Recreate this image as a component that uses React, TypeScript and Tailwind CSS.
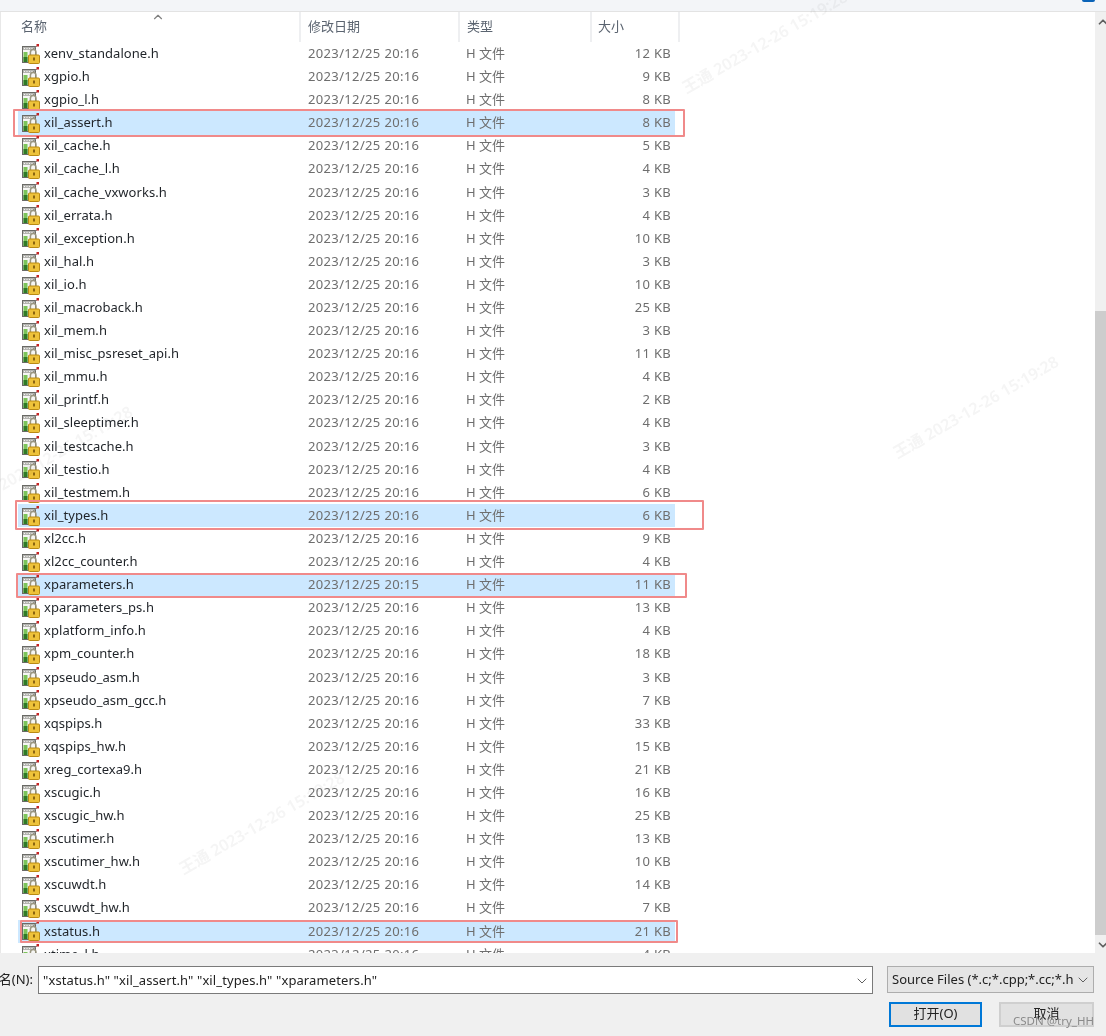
import { ChevronDown, ChevronUp } from "lucide-react";

type FileRow = {
    name: string;
    size: number;
    time?: string;
    outline?: string;
};

const files: FileRow[] = [
    { name: "xenv_standalone.h", size: 12 },
    { name: "xgpio.h", size: 9 },
    { name: "xgpio_l.h", size: 8 },
    { name: "xil_assert.h", size: 8, outline: "-left-[5px] -top-[2px] w-[672px] h-[28px]" },
    { name: "xil_cache.h", size: 5 },
    { name: "xil_cache_l.h", size: 4 },
    { name: "xil_cache_vxworks.h", size: 3 },
    { name: "xil_errata.h", size: 4 },
    { name: "xil_exception.h", size: 10 },
    { name: "xil_hal.h", size: 3 },
    { name: "xil_io.h", size: 10 },
    { name: "xil_macroback.h", size: 25 },
    { name: "xil_mem.h", size: 3 },
    { name: "xil_misc_psreset_api.h", size: 11 },
    { name: "xil_mmu.h", size: 4 },
    { name: "xil_printf.h", size: 2 },
    { name: "xil_sleeptimer.h", size: 4 },
    { name: "xil_testcache.h", size: 3 },
    { name: "xil_testio.h", size: 4 },
    { name: "xil_testmem.h", size: 6 },
    { name: "xil_types.h", size: 6, outline: "-left-[3px] -top-[4px] w-[689px] h-[30px]" },
    { name: "xl2cc.h", size: 9 },
    { name: "xl2cc_counter.h", size: 4 },
    { name: "xparameters.h", size: 11, time: "20:15", outline: "-left-[2px] top-0 w-[671px] h-[25px]" },
    { name: "xparameters_ps.h", size: 13 },
    { name: "xplatform_info.h", size: 4 },
    { name: "xpm_counter.h", size: 18 },
    { name: "xpseudo_asm.h", size: 3 },
    { name: "xpseudo_asm_gcc.h", size: 7 },
    { name: "xqspips.h", size: 33 },
    { name: "xqspips_hw.h", size: 15 },
    { name: "xreg_cortexa9.h", size: 21 },
    { name: "xscugic.h", size: 16 },
    { name: "xscugic_hw.h", size: 25 },
    { name: "xscutimer.h", size: 13 },
    { name: "xscutimer_hw.h", size: 10 },
    { name: "xscuwdt.h", size: 14 },
    { name: "xscuwdt_hw.h", size: 7 },
    { name: "xstatus.h", size: 21, outline: "left-[2px] top-0 w-[658px] h-[23px]" },
    { name: "xtime_l.h", size: 4 },
];

const stamps = [
    "left-[671px] top-[31px]",
    "left-[882px] top-[396px]",
    "left-[168px] top-[812px]",
    "left-[-44px] top-[446px]",
];

function FileIcon() {
    return (
        <svg viewBox="0 0 18 20" className="w-[18px] h-[20px] shrink-0">
            <rect x="0.5" y="2.5" width="13" height="16" fill="#f6f6f4" stroke="#6a6a66" />
            <rect x="1" y="3" width="12" height="3" fill="#b4b4b0" />
            <path d="M2 4.5h1M4.5 4.5h1M7 4.5h1M9.5 4.5h1" stroke="#f6f6f4" strokeWidth="1" />
            <rect x="1.5" y="8" width="4" height="10" fill="#7cc45a" />
            <rect x="1.5" y="13" width="4" height="5" fill="#2f7a26" />
            <path d="M11 5 L15 2" stroke="#8a8a86" strokeWidth="1" />
            <rect x="14.5" y="0" width="2.5" height="2.5" fill="#c42222" />
            <path d="M8.4 11V8.4a2.8 2.8 0 0 1 5.6 0V11" fill="none" stroke="#9a9680" strokeWidth="1.5" />
            <rect x="6.5" y="11" width="11" height="8.5" rx="1" fill="#eec23a" stroke="#b98a14" />
            <rect x="11" y="13.5" width="2" height="3" fill="#8a6410" />
        </svg>
    );
}

function HeaderCell({ label, width, inset = "pl-[7px]" }: { label: string; width: string; inset?: string }) {
    return (
        <div className={`${width} ${inset} h-full shrink-0 border-r-2 border-[#eeeff1] text-[13px] text-[#5b6470] flex items-center`}>
            {label}
        </div>
    );
}

export default function App() {
    return (
        <div className="relative w-[1106px] h-[1036px] overflow-hidden bg-[#f0f0f0] font-['Noto_Sans','Noto_Sans_CJK_SC',sans-serif]">
            <div className="h-3 bg-[#f3f5f8] border-b border-[#e3e3e3] flex justify-end pr-[11px]">
                <div className="w-[13px] h-[2px] rounded-b-full bg-[#0a63b8]" />
            </div>

            <div className="flex h-[941px]">
                <div className="relative flex-1 bg-white overflow-hidden border-l border-[#e8e8e8]">
                    {/* column headers */}
                    <div className="relative flex h-[30.2px] pl-[13px]">
                        <HeaderCell label="名称" width="w-[287px]" />
                        <HeaderCell label="修改日期" width="w-[159px]" />
                        <HeaderCell label="类型" width="w-[132px]" />
                        <HeaderCell label="大小" width="w-[88px]" inset="pl-[6px]" />
                        <ChevronUp className="absolute left-[150px] -top-[2px] w-[14px] h-[14px] text-[#808080]" />
                    </div>

                    {files.map((file) => (
                        <div
                            key={file.name}
                            className={`relative flex items-center h-[23.1px] ml-[17px] w-[657px] text-[13px] ${file.outline ? "bg-[#cce8ff]" : ""}`}
                        >
                            <div className="flex items-center w-[290px] shrink-0 pl-[4px] gap-[4px] text-[#1f2328] tracking-[0.05px]">
                                <FileIcon />
                                <span>{file.name}</span>
                            </div>
                            <div className="w-[158px] shrink-0 text-[#6e6e6e] tracking-[0.35px]">2023/12/25 {file.time ?? "20:16"}</div>
                            <div className="w-[120px] shrink-0 text-[#6e6e6e]">H 文件</div>
                            <div className="flex-1 text-right pr-[4px] text-[#6e6e6e] tracking-[0.3px]">{file.size} KB</div>
                            {file.outline && (
                                <div className={`absolute ${file.outline} border-2 border-[#f08a8a] rounded-[1px]`} />
                            )}
                        </div>
                    ))}
                </div>

                {/* scrollbar */}
                <div className="relative w-[11px] bg-[#f0f0f0] flex flex-col">
                    <div className="h-[299px]" />
                    <div className="h-[624px] bg-[#cdcdcd]" />
                    <ChevronUp className="absolute left-[1px] top-[3px] w-[14px] h-[14px] text-[#606060]" strokeWidth={3} />
                    <ChevronDown className="absolute left-[1px] top-[926px] w-[14px] h-[14px] text-[#606060]" strokeWidth={3} />
                </div>
            </div>

            {/* file name and buttons */}
            <div className="flex h-[83px] pt-[13px] text-[13px] text-[#222]">
                <div className="w-[38px] shrink-0 h-7 flex items-center justify-end pr-[5px] overflow-hidden whitespace-nowrap">名(N):</div>
                <div className="w-[835px] shrink-0 h-7 bg-white border border-[#7a7a7a] flex items-center justify-between pl-[4px] pr-[2px] pt-px">
                    <span className="tracking-[0.1px]">"xstatus.h" "xil_assert.h" "xil_types.h" "xparameters.h"</span>
                    <ChevronDown className="w-4 h-4 text-[#606060]" strokeWidth={1.5} />
                </div>
                <div className="ml-[14px] w-[207px] shrink-0 flex flex-col">
                    <div className="h-[27px] bg-[#e5e5e5] border border-[#adadad] flex items-center justify-between pl-[4px] pr-[2px]">
                        <span className="whitespace-nowrap overflow-hidden">Source Files (*.c;*.cpp;*.cc;*.h</span>
                        <ChevronDown className="w-4 h-4 shrink-0 text-[#606060]" strokeWidth={1.5} />
                    </div>
                    <div className="flex justify-between mt-[9px] pl-[2px]">
                        <button className="w-[93px] h-[25px] bg-[#e1e1e1] border-2 border-[#0078d7] pb-px">打开(O)</button>
                        <button className="w-[95px] h-[25px] bg-[#e1e1e1] border-2 border-[#cfcfcf] pb-px">取消</button>
                    </div>
                </div>
            </div>

            {/* watermarks */}
            {stamps.map((pos) => (
                <div key={pos} className={`absolute ${pos} w-[187px] text-center -rotate-[30deg] text-[16px] leading-[22px] font-semibold text-[#f5f5f5] whitespace-nowrap pointer-events-none mix-blend-multiply`}>
                    王通 2023-12-26 15:19:28
                </div>
            ))}
            <div className="absolute left-[1013px] top-[1012px] text-[11.5px] text-[#8a8a8a] whitespace-nowrap">CSDN @try_HH</div>
        </div>
    );
}
